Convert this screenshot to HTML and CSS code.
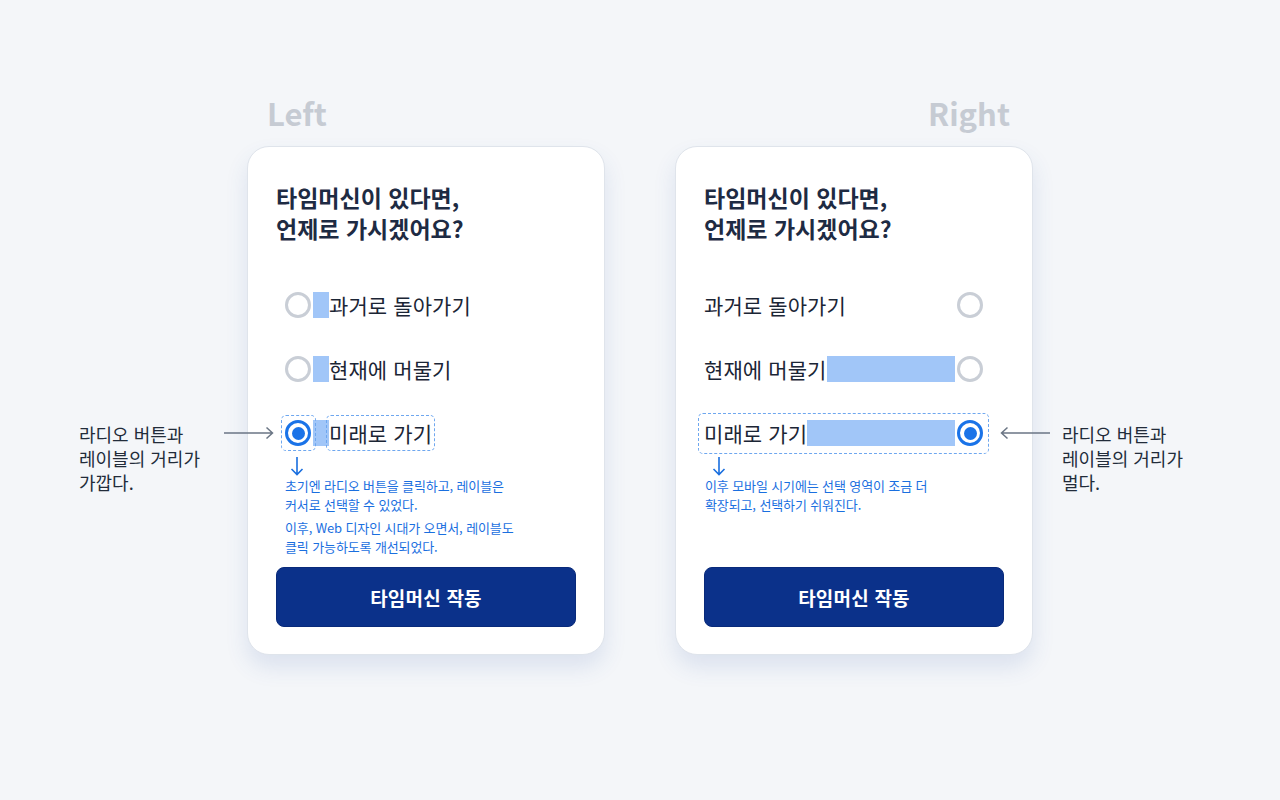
FILE: index.html
```html
<!DOCTYPE html>
<html lang="ko">
<head>
<meta charset="utf-8">
<title>Radio label distance</title>
<link rel="stylesheet" href="styles.css">
</head>
<body>
<main class="stage">
  <p class="note note-left">라디오 버튼과<br>레이블의 거리가<br>가깝다.</p>

  <section class="column">
    <h2 class="column-label">Left</h2>
    <div class="card">
      <h1 class="question">타임머신이 있다면,<br>언제로 가시겠어요?</h1>
      <ul class="options options-left">
        <li class="option">
          <span class="radio"></span><span class="gap gap-fill"></span><span class="label">과거로 돌아가기</span>
        </li>
        <li class="option">
          <span class="radio"></span><span class="gap gap-fill"></span><span class="label">현재에 머물기</span>
        </li>
        <li class="option">
          <span class="radio radio-on radio-hit"></span><span class="gap gap-fill"></span><span class="label label-hit">미래로 가기</span>
          <svg class="pointer pointer-left" width="50" height="14" viewBox="0 0 50 14" aria-hidden="true"><path d="M0 7H48M42.5 1.5L48.5 7L42.5 12.5"/></svg>
        </li>
      </ul>
      <div class="annot annot-left">
        <svg class="down" width="16" height="19" viewBox="0 0 16 19" aria-hidden="true"><path d="M8 0V17.5M2.5 12L8 17.5L13.5 12"/></svg>
        <p>초기엔 라디오 버튼을 클릭하고, 레이블은<br>커서로 선택할 수 있었다.</p>
        <p>이후, Web 디자인 시대가 오면서, 레이블도<br>클릭 가능하도록 개선되었다.</p>
      </div>
      <button class="cta" type="button">타임머신 작동</button>
    </div>
  </section>

  <section class="column column-right">
    <h2 class="column-label label-right">Right</h2>
    <div class="card">
      <h1 class="question">타임머신이 있다면,<br>언제로 가시겠어요?</h1>
      <ul class="options options-right">
        <li class="option">
          <span class="label">과거로 돌아가기</span><span class="gap"></span><span class="radio"></span>
        </li>
        <li class="option">
          <span class="label">현재에 머물기</span><span class="gap gap-fill"></span><span class="radio"></span>
        </li>
        <li class="option row-hit">
          <span class="label">미래로 가기</span><span class="gap gap-fill"></span><span class="radio radio-on"></span>
          <svg class="pointer pointer-right" width="50" height="14" viewBox="0 0 50 14" aria-hidden="true"><path d="M50 7H2M7.5 1.5L1.5 7L7.5 12.5"/></svg>
        </li>
      </ul>
      <div class="annot annot-right">
        <svg class="down" width="16" height="19" viewBox="0 0 16 19" aria-hidden="true"><path d="M8 0V17.5M2.5 12L8 17.5L13.5 12"/></svg>
        <p>이후 모바일 시기에는 선택 영역이 조금 더<br>확장되고, 선택하기 쉬워진다.</p>
      </div>
      <button class="cta" type="button">타임머신 작동</button>
    </div>
  </section>

  <p class="note note-right">라디오 버튼과<br>레이블의 거리가<br>멀다.</p>
</main>
</body>
</html>
```

FILE: styles.css
```css
* { box-sizing: border-box; }

html, body {
  margin: 0;
  padding: 0;
}

body {
  background: #f4f6f9;
  font-family: "Noto Sans CJK KR", "Noto Sans", sans-serif;
  color: #1d2636;
  width: 1280px;
  height: 800px;
  overflow: hidden;
}

.stage {
  display: flex;
  justify-content: center;
  align-items: flex-start;
  padding-top: 93px;
}

.note {
  width: 139px;
  margin: 329px 0 0;
  font-size: 18px;
  line-height: 24px;
  color: #222c3a;
  white-space: nowrap;
}

.note-left { margin-right: 29px; }
.note-right { margin-left: 29px; }

.column {
  width: 358px;
  display: flex;
  flex-direction: column;
}

.column-right { margin-left: 70px; }

.column-label {
  margin: 0 0 13px;
  padding: 0 20px;
  height: 40px;
  font-size: 31px;
  line-height: 40px;
  font-weight: 700;
  color: #c6cbd3;
}

.label-right { text-align: right; padding-right: 23px; }

.card {
  height: 509px;
  background: #ffffff;
  border: 1px solid #dfe4eb;
  border-radius: 22px;
  padding: 35px 28px 27px;
  display: flex;
  flex-direction: column;
  box-shadow: 0 12px 22px rgba(56, 96, 170, 0.13);
}

.question {
  margin: 0;
  font-size: 23px;
  line-height: 31px;
  font-weight: 700;
  color: #1e2b43;
}

.options {
  list-style: none;
  margin: 37px 0 0;
  display: flex;
  flex-direction: column;
  gap: 16px;
}

.options-left { padding: 0 0 0 9px; }
.options-right { padding: 0 21px 0 0; }

.option {
  position: relative;
  height: 48px;
  display: flex;
  align-items: center;
}

.label {
  position: relative;
  font-size: 21px;
  line-height: 26px;
  color: #1b2535;
  letter-spacing: 0.1px;
  white-space: nowrap;
}

.radio {
  position: relative;
  flex: none;
  width: 26px;
  height: 26px;
  border-radius: 50%;
  border: 3px solid #c9ced6;
  background: #fff;
}

.radio-on {
  border-color: #1a73e8;
}

.radio-on::before {
  content: "";
  position: absolute;
  left: 50%;
  top: 50%;
  width: 13px;
  height: 13px;
  margin: -6.5px 0 0 -6.5px;
  border-radius: 50%;
  background: #1a73e8;
}

.gap {
  height: 26px;
}

.options-left .gap {
  width: 16px;
  margin-left: 2px;
}

.options-right .gap {
  flex: 1;
  margin-right: 2px;
}

.gap-fill { background: #a1c6f8; }

.radio-hit::after,
.label-hit::after,
.row-hit::after {
  content: "";
  position: absolute;
  border: 1px dashed #6ea7ef;
  border-radius: 5px;
  pointer-events: none;
}

.radio-hit::after {
  left: -7px;
  right: -8px;
  top: -8px;
  bottom: -8px;
}

.label-hit::after {
  left: -3px;
  right: -3px;
  top: -5px;
  bottom: -5px;
}

.row-hit::after {
  left: -6px;
  right: -6px;
  top: 4px;
  bottom: 3px;
}

.pointer {
  position: absolute;
  top: 17px;
  fill: none;
  stroke: #6b7685;
  stroke-width: 1.5;
}

.pointer-left { left: -61px; }
.pointer-right { right: -67px; }

.annot {
  color: #1a6fdf;
  font-size: 13px;
  line-height: 19px;
}

.annot p {
  margin: 0 0 4px 9px;
  letter-spacing: -0.12px;
  white-space: nowrap;
}

.annot-right p { margin-left: 1px; }

.down {
  display: block;
  margin-left: 13px;
  fill: none;
  stroke: #1a6fdf;
  stroke-width: 1.6;
}

.annot-right .down { margin-left: 7px; }

.cta {
  margin-top: auto;
  width: 100%;
  height: 60px;
  border: 1px solid #092a7a;
  border-radius: 8px;
  background: #0b318a;
  color: #ffffff;
  font-family: inherit;
  font-size: 19px;
  font-weight: 700;
  letter-spacing: 0.2px;
}
```
